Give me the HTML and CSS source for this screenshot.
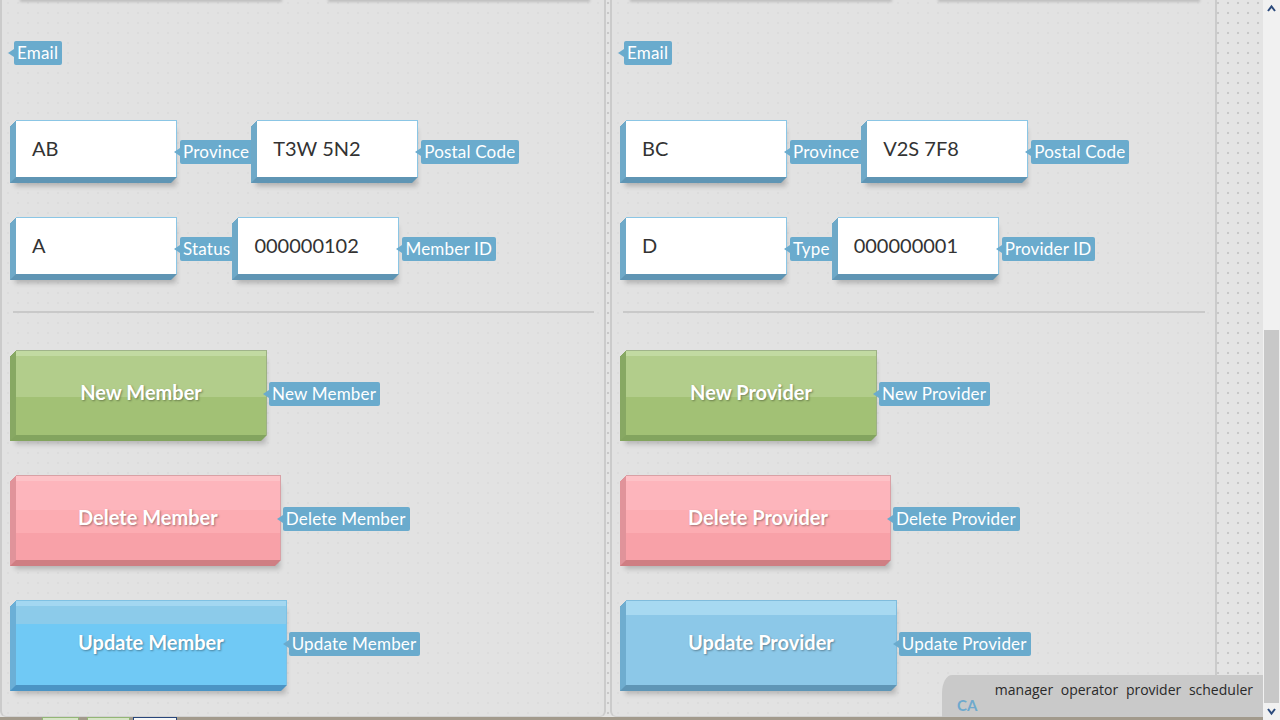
FILE: index.html
```html
<!DOCTYPE html>
<html lang="en">
<head>
<meta charset="utf-8">
<title>Members and Providers</title>
<link rel="stylesheet" href="styles.css">
</head>
<body>
<div class="screen">
  <div class="viewport">
    <div class="panels">
      <section class="panel">
        <div class="ghost-row"><span class="ghost"></span><span class="ghost"></span></div>
        <div class="row row-email"><span class="tag">Email</span></div>
        <div class="row row-first">
          <div class="field">AB</div><span class="tag">Province</span>
          <div class="field">T3W 5N2</div><span class="tag">Postal Code</span>
        </div>
        <div class="row">
          <div class="field">A</div><span class="tag">Status</span>
          <div class="field">000000102</div><span class="tag">Member ID</span>
        </div>
        <hr class="divider">
        <div class="btn-row"><button class="btn btn-green">New Member</button><span class="tag">New Member</span></div>
        <div class="btn-row"><button class="btn btn-pink">Delete Member</button><span class="tag">Delete Member</span></div>
        <div class="btn-row"><button class="btn btn-sky">Update Member</button><span class="tag">Update Member</span></div>
      </section>
      <section class="panel panel-right">
        <div class="ghost-row"><span class="ghost"></span><span class="ghost"></span></div>
        <div class="row row-email"><span class="tag">Email</span></div>
        <div class="row row-first">
          <div class="field">BC</div><span class="tag">Province</span>
          <div class="field">V2S 7F8</div><span class="tag">Postal Code</span>
        </div>
        <div class="row">
          <div class="field">D</div><span class="tag">Type</span>
          <div class="field">000000001</div><span class="tag">Provider ID</span>
        </div>
        <hr class="divider">
        <div class="btn-row"><button class="btn btn-green">New Provider</button><span class="tag">New Provider</span></div>
        <div class="btn-row"><button class="btn btn-pink">Delete Provider</button><span class="tag">Delete Provider</span></div>
        <div class="btn-row"><button class="btn btn-blue">Update Provider</button><span class="tag">Update Provider</span></div>
      </section>
      <div class="strip"></div>
    </div>
    <div class="taskbar">
      <span class="task task-green"></span>
      <span class="task task-green task-wide"></span>
      <span class="task task-blue"></span>
    </div>
    <div class="footer">
      <div class="roles"><span>manager</span> <span>operator</span> <span>provider</span> <span>scheduler</span></div>
      <div class="locale">CA</div>
    </div>
  </div>
  <div class="scrollbar">
    <div class="sb-btn">
      <svg width="17" height="17" viewBox="0 0 17 17"><polyline points="5,11 8.5,6.5 12,11" fill="none" stroke="#2b4a7c" stroke-width="2"/></svg>
    </div>
    <div class="sb-track"><div class="sb-thumb"></div></div>
    <div class="sb-btn">
      <svg width="17" height="17" viewBox="0 0 17 17"><polyline points="5,6 8.5,10.5 12,6" fill="none" stroke="#2b4a7c" stroke-width="2"/></svg>
    </div>
  </div>
</div>
</body>
</html>
```

FILE: styles.css
```css
* { box-sizing: border-box; }

html, body {
  margin: 0;
  padding: 0;
  width: 1280px;
  height: 720px;
  overflow: hidden;
  font-family: Lato, "Open Sans", sans-serif;
}

.screen {
  display: flex;
  width: 1280px;
  height: 720px;
  background-color: #e4e4e4;
  background-image: radial-gradient(circle, #c8c8c8 1px, rgba(200,200,200,0) 1.6px);
  background-size: 10px 10px;
  background-position: 3px -2px;
}

.viewport {
  position: relative;
  flex: 1;
  display: flex;
  flex-direction: column;
}

.panels {
  flex: 1;
  display: flex;
  gap: 4px;
  min-height: 0;
}

.panel {
  width: 606px;
  height: 717px;
  overflow: hidden;
  background: rgba(225, 225, 225, 0.78);
  border: 2px solid #cbcbcb;
  border-top: none;
  border-bottom: 1px solid #d2d2d2;
  border-radius: 0 0 6px 6px;
  padding-left: 8px;
}

.panel-right {
  width: 607px;
}

.strip { flex: 1; }

.ghost-row {
  display: flex;
  gap: 46px;
  margin: -10px 0 0 10px;
}

.ghost {
  width: 262px;
  height: 10px;
  box-shadow: 0 2px 3px rgba(0, 0, 0, 0.16);
}

.row {
  display: flex;
  align-items: center;
}

.row-email {
  margin-top: 41px;
  padding-left: 4px;
}

.row-first { margin-top: 55px; }
.row + .row:not(.row-first) { margin-top: 34px; }

/* 3D input box: white face, extruded down-left */
.field {
  position: relative;
  width: 161px;
  height: 57px;
  margin: 0 0 6px 6px;
  display: flex;
  align-items: center;
  padding: 0 0 2px 16px;
  background: #fff;
  border-top: 1px solid #8bc6e5;
  border-right: 1px solid #8bc6e5;
  box-shadow:
    -1px 1px 0 #6ea9c8, -2px 2px 0 #6ea9c8, -3px 3px 0 #6ea9c8,
    -4px 4px 0 #6ea9c8, -5px 5px 0 #6ea9c8, -6px 6px 0 #6ea9c8,
    -1px 9px 5px rgba(0, 0, 0, 0.22);
  font-size: 20px;
  color: #333;
}

.field::after {
  content: "";
  position: absolute;
  left: -3px;
  top: 100%;
  width: calc(100% + 1px);
  height: 6px;
  background: #5f95b4;
  transform: skewX(-45deg);
}

.field + .tag { margin-left: 3px; }
.tag + .field { margin-left: 4px; }

.tag {
  position: relative;
  height: 24px;
  line-height: 24px;
  padding: 0 4px 0 3px;
  background: #6aabcd;
  color: #fff;
  font-size: 17px;
  letter-spacing: 0.2px;
  border-radius: 2px;
  white-space: nowrap;
}

.tag::before {
  content: "";
  position: absolute;
  left: -6px;
  top: 50%;
  margin-top: -4px;
  border-top: 4px solid transparent;
  border-bottom: 4px solid transparent;
  border-right: 6px solid #6aabcd;
}

.divider {
  margin: 31px 10px 0 3px;
  height: 2px;
  border: none;
  background: #c9c9c9;
}

.btn-row {
  display: flex;
  align-items: center;
  margin-top: 34px;
}

.divider + .btn-row { margin-top: 37px; }

.btn-row .tag {
  margin-left: 2px;
  margin-bottom: 3px;
}

/* 3D button: coloured face, extruded down-left */
.btn {
  position: relative;
  min-width: 251px;
  height: 85px;
  margin: 0 0 6px 6px;
  padding: 0 62px 3px 62px;
  border-style: solid;
  border-width: 1px 1px 0 0;
  font-family: Lato, sans-serif;
  font-weight: bold;
  font-size: 20px;
  color: #fff;
  text-shadow: 1px 1px 2px rgba(0, 0, 0, 0.35);
  white-space: nowrap;
  cursor: pointer;
  --side: #87a863;
  --base: #83a45f;
  box-shadow:
    -1px 1px 0 var(--side), -2px 2px 0 var(--side), -3px 3px 0 var(--side),
    -4px 4px 0 var(--side), -5px 5px 0 var(--side), -6px 6px 0 var(--side),
    -1px 9px 5px rgba(0, 0, 0, 0.2);
}

.btn::after {
  content: "";
  position: absolute;
  left: -3px;
  top: 100%;
  width: calc(100% + 1px);
  height: 6px;
  background: var(--base);
  transform: skewX(-45deg);
}

.btn-green {
  --side: #87a863;
  --base: #83a45f;
  border-color: #a0b48a #9db184;
  background: linear-gradient(to bottom, #c2daa2 0, #c2daa2 5px, #b2cd8b 5px, #b2cd8b 46px, #a2c175 46px, #a2c175 100%);
}

.btn-pink {
  --side: #e0939a;
  --base: #cf7e83;
  border-color: #d9a0a5 #d9a0a5;
  background: linear-gradient(to bottom, #fdc2c7 0, #fdc2c7 5px, #fdb5bc 5px, #fdb5bc 34px, #fcacb2 34px, #fcacb2 57px, #f8a1a8 57px, #f8a1a8 100%);
}

.btn-sky {
  --side: #6bafd6;
  --base: #4b94c4;
  border-color: #7fc1e3 #7fc1e3;
  background: linear-gradient(to bottom, #a3d7f1 0, #a3d7f1 5px, #8ccbea 5px, #8ccbea 23px, #70c9f5 23px, #70c9f5 100%);
}

.btn-blue {
  --side: #6fadcf;
  --base: #5f96b6;
  border-color: #80bcdc #80bcdc;
  background: linear-gradient(to bottom, #a7d9f1 0, #a7d9f1 14px, #8cc8e8 14px, #8cc8e8 100%);
}

.taskbar {
  height: 3px;
  background: #a29a8c;
  display: flex;
  padding-left: 42px;
  gap: 8px;
}

.task {
  width: 37px;
  height: 3px;
  border: 1px solid #93b676;
  border-bottom: none;
  background: #d6e4c7;
}

.task-wide { width: 43px; }

.task-blue {
  width: 44px;
  margin-left: -5px;
  border-color: #27467a;
  background: #f6f6f6;
}

.footer {
  position: absolute;
  right: 0;
  bottom: 3px;
  width: 321px;
  height: 42px;
  background: #c9c9c9;
  border-top-left-radius: 10px 18px;
  padding: 5px 10px 0 15px;
}

.roles {
  text-align: right;
  font-family: "Open Sans", sans-serif;
  font-size: 14px;
  line-height: 20px;
  color: #2a2a2a;
  word-spacing: 4px;
}

.locale {
  margin-top: -3px;
  font-family: Lato, sans-serif;
  font-weight: bold;
  font-size: 15px;
  line-height: 16px;
  color: #6fa9cd;
}

.scrollbar {
  width: 17px;
  height: 720px;
  background: #f1f1f1;
  display: flex;
  flex-direction: column;
}

.sb-btn {
  height: 17px;
  flex: none;
}

.sb-btn svg { display: block; }

.sb-track {
  flex: 1;
  display: flex;
  flex-direction: column;
  padding: 313px 1px 0 1px;
}

.sb-thumb {
  flex: 1;
  background: #c8c8c8;
}
```
